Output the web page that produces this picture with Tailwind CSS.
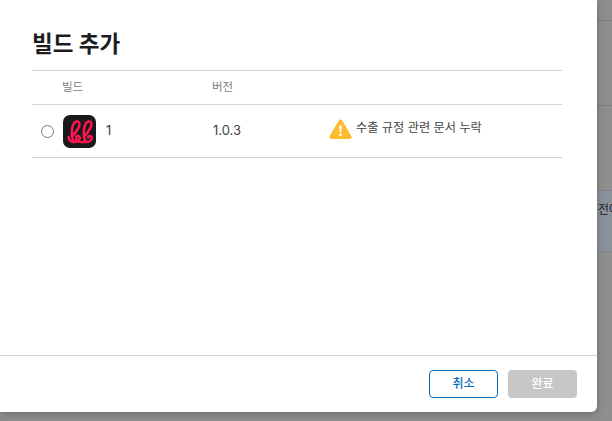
<!DOCTYPE html>
<html lang="ko">
<head>
  <meta charset="UTF-8">
  <title>빌드 추가</title>
  <script src="https://cdn.jsdelivr.net/npm/@tailwindcss/browser@4"></script>
</head>
<body class="w-[612px] h-[421px] overflow-hidden bg-[#8f8f8f] font-['Inter','Noto_Sans_CJK_KR',sans-serif]">
  <div class="flex items-start">
    <!-- modal -->
    <div class="w-[597px] h-[412px] flex-none flex flex-col bg-white rounded-br-md shadow-[0_2px_10px_rgba(0,0,0,0.25)] z-10">
      <div class="flex-1 pl-8 pr-[35px]">
        <h1 class="pt-[27px] h-[70px] text-[22.5px] leading-[33px] font-bold text-[#1d1d1f]">빌드 추가</h1>
        <div class="flex items-center h-[35px] border-y border-[#d2d2d2] text-[11.5px] text-[#808080]">
          <span class="w-[180px] pl-[30px]">빌드</span>
          <span>버전</span>
        </div>
        <div class="flex items-center h-[53px] border-b border-[#d2d2d2] text-[13px] text-[#444]">
          <span class="ml-[9px] w-[13px] h-[13px] rounded-full border border-[#777]"></span>
          <div class="ml-[9px] w-[33px] h-[33px] rounded-[7px] bg-[#1a1a1c]">
            <svg width="33" height="33" viewBox="0 0 33 33" fill="none" stroke="#ff1350" stroke-width="2.500" stroke-linecap="round" stroke-linejoin="round">
              <path d="M5.500 22C6 25.500 8 27 11 27C14 27 16.800 25.500 16.800 23C16.800 20.500 13.300 20.300 13 22.500C12.800 25 15 27 18 27C21 27 22 27 23 27C26 27 28.800 25.500 28.800 23C28.800 20.500 25.300 20.300 25 22.500"/>
              <path d="M11 27C7.500 22 8 8 13.500 6.500C17.500 5.500 17 11 14.500 14.500C13 17 11.500 19 10 20.500"/>
              <path d="M23 27C19.500 22 20 8 25.500 6.500C29.500 5.500 29 11 26.500 14.500C25 17 23.500 19 22 20.500"/>
            </svg>
          </div>
          <span class="ml-[10px] w-[107px]">1</span>
          <span class="w-[116px]">1.0.3</span>
          <div class="flex items-center gap-[4px] text-[12.2px] -mt-[4px]">
            <svg width="23" height="21" viewBox="0 0 23 21">
              <path d="M11.500 2.500L20.500 18H2.500Z" fill="#fdbb2d" stroke="#fdbb2d" stroke-width="4" stroke-linejoin="round"/>
              <path d="M10.200 6.500H12.800L12.300 13.500H10.700Z" fill="#fff"/>
              <circle cx="11.500" cy="16" r="1.400" fill="#fff"/>
            </svg>
            <span class="-mt-[1px]">수출 규정 관련 문서 누락</span>
          </div>
        </div>
      </div>
      <div class="flex justify-end items-center gap-[10px] h-[57px] pr-5 pb-[1px] border-t border-[#d2d2d2] text-[12px] font-medium">
        <button class="w-[69px] h-[28px] rounded-[4px] border border-[#0a6ebd] text-[#0a6ebd]">취소</button>
        <button class="w-[69px] h-[28px] rounded-[4px] bg-[#c6c6c6] text-white">완료</button>
      </div>
    </div>
    <!-- page behind the modal -->
    <div class="w-[15px] flex-none">
      <div class="h-[21px] border-b border-[#7e7e7e]"></div>
      <div class="h-[85px] border-b border-[#7e7e7e]"></div>
      <div class="h-[84px]"></div>
      <div class="h-[62px] bg-[#8b929c] border-y border-[#7f8590] pl-[1px] pt-[11px] text-[12px] leading-[16px] text-[#222] whitespace-nowrap overflow-hidden">전에</div>
    </div>
  </div>
</body>
</html>
